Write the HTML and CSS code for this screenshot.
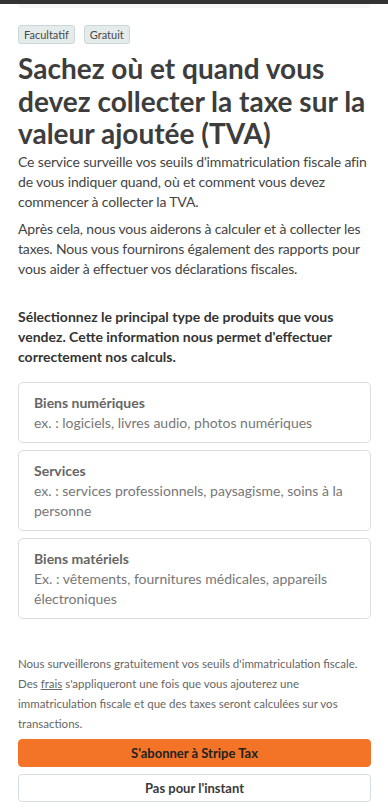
FILE: index.html
```html
<!DOCTYPE html>
<html lang="fr">
<head>
  <meta charset="UTF-8" />
  <meta name="viewport" content="width=device-width, initial-scale=1.0"/>
  <title>Stripe Tax</title>
  <link rel="stylesheet" href="styles.css">
</head>
<body>
  <div class="topbar"><div class="topbar-sheet"></div></div>

  <div class="container">
    <div class="badges">
      <span class="badge">Facultatif</span>
      <span class="badge">Gratuit</span>
    </div>

    <h1>Sachez où et quand vous devez collecter la taxe sur la valeur ajoutée (TVA)</h1>

    <p class="intro">Ce service surveille vos seuils d'immatriculation fiscale afin de vous indiquer quand, où et comment vous devez commencer à collecter la TVA.</p>
    <p class="intro">Après cela, nous vous aiderons à calculer et à collecter les taxes. Nous vous fournirons également des rapports pour vous aider à effectuer vos déclarations fiscales.</p>

    <p class="question">Sélectionnez le principal type de produits que vous vendez. Cette information nous permet d'effectuer correctement nos calculs.</p>

    <div class="options">
      <div class="option">
        <div class="option-title">Biens numériques</div>
        <div class="option-desc">ex. : logiciels, livres audio, photos numériques</div>
      </div>
      <div class="option">
        <div class="option-title">Services</div>
        <div class="option-desc">ex. : services professionnels, paysagisme, soins à la personne</div>
      </div>
      <div class="option">
        <div class="option-title">Biens matériels</div>
        <div class="option-desc">Ex. : vêtements, fournitures médicales, appareils électroniques</div>
      </div>
    </div>

    <p class="note">Nous surveillerons gratuitement vos seuils d'immatriculation fiscale. Des <a href="#">frais</a> s'appliqueront une fois que vous ajouterez une immatriculation fiscale et que des taxes seront calculées sur vos transactions.</p>

    <div class="actions">
      <button class="btn btn-primary">S'abonner à Stripe Tax</button>
      <button class="btn btn-secondary">Pas pour l'instant</button>
    </div>
  </div>
</body>
</html>
```

FILE: styles.css
```css
body {
  margin: 0;
  padding: 0;
  font-family: "Segoe UI", Lato, sans-serif;
  background-color: #fff;
  color: #444;
}

.topbar {
  height: 4px;
  background-color: #333;
  position: relative;
}

.topbar-sheet {
  position: absolute;
  left: 18px;
  right: 18px;
  top: 4px;
  height: 4px;
  background-color: #f6f6f6;
  border-radius: 0 0 8px 8px;
}

.container {
  padding: 21px 17px 0 18px;
}

.badges {
  display: flex;
  gap: 9px;
}

.badge {
  font-size: 11px;
  line-height: 17px;
  padding: 0 5px;
  background-color: #e4ebeb;
  border: 1px solid #cbd7d7;
  border-radius: 3px;
  color: #4a4a4a;
}

h1 {
  font-size: 28px;
  line-height: 32.5px;
  font-weight: bold;
  color: #3d3d3d;
  margin: 8px 0 2px;
}

.intro {
  font-size: 14px;
  line-height: 20px;
  letter-spacing: -0.15px;
  margin: 0 0 7px;
}

.question {
  font-size: 14px;
  line-height: 20px;
  font-weight: bold;
  color: #333;
  margin: 28px 0 15px;
}

.options {
  display: flex;
  flex-direction: column;
  gap: 7px;
}

.option {
  border: 1px solid #ddd;
  border-radius: 5px;
  padding: 10px 15px 9px;
}

.option-title {
  font-size: 14px;
  line-height: 20px;
  font-weight: bold;
  color: #666;
}

.option-desc {
  font-size: 14px;
  line-height: 20px;
  color: #777;
}

.note {
  font-size: 11.5px;
  line-height: 20px;
  color: #666;
  margin: 35px 0 5px;
}

.note a {
  color: #666;
  text-decoration: underline;
}

.actions {
  display: flex;
  flex-direction: column;
  gap: 7px;
}

.btn {
  font-family: inherit;
  font-size: 13px;
  font-weight: bold;
  height: 28px;
  border-radius: 4px;
  cursor: pointer;
}

.btn-primary {
  background-color: #f47427;
  border: 1px solid #f47427;
  color: #222;
}

.btn-secondary {
  background-color: #fff;
  border: 1px solid #d5dde5;
  color: #3a3a3a;
}
```
